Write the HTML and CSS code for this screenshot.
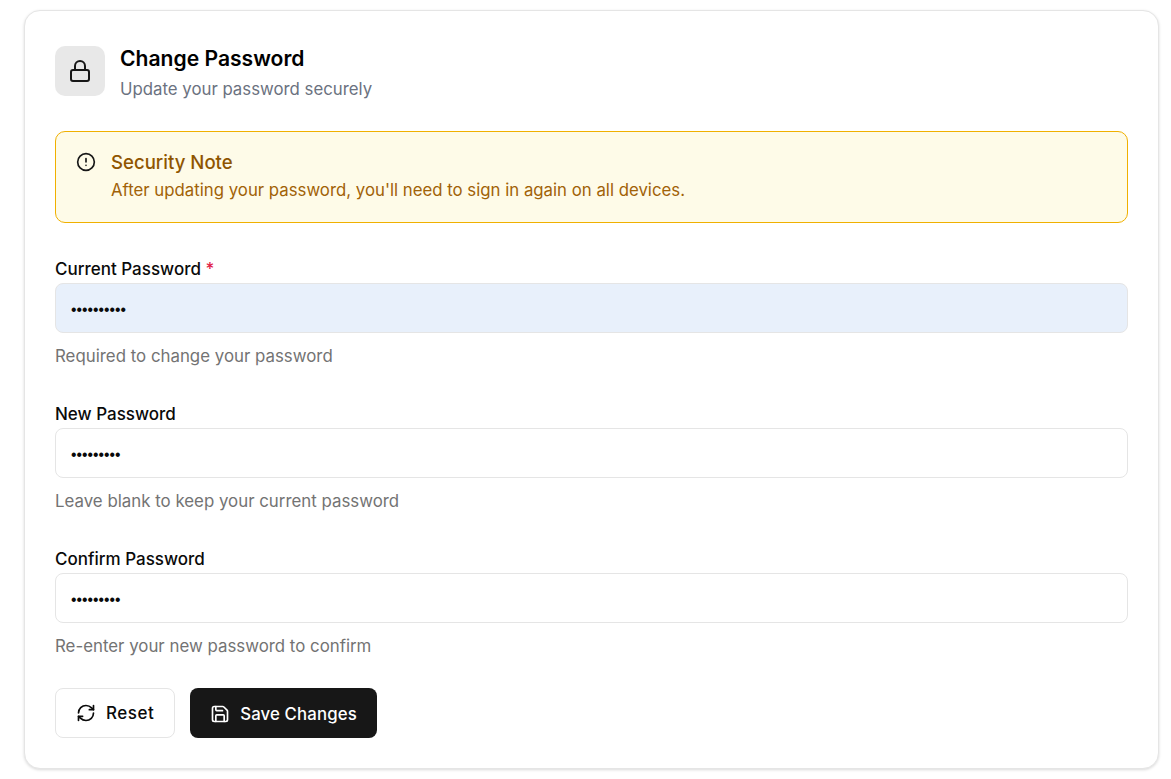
FILE: index.html
```html
<!DOCTYPE html>
<html lang="en">
<head>
    <meta charset="UTF-8">
    <meta name="viewport" content="width=device-width, initial-scale=1.0">
    <title>Change Password</title>
    <link rel="stylesheet" href="styles.css">
</head>
<body>

<div class="card">
    <div class="card-header">
        <div class="header-icon">
            <svg width="24" height="24" viewBox="0 0 24 24" fill="none" stroke="currentColor" stroke-width="2" stroke-linecap="round" stroke-linejoin="round">
                <rect x="3" y="11" width="18" height="11" rx="2"></rect>
                <path d="M7 11V7a5 5 0 0 1 10 0v4"></path>
            </svg>
        </div>
        <div>
            <h2 class="card-title">Change Password</h2>
            <p class="card-subtitle">Update your password securely</p>
        </div>
    </div>

    <div class="note">
        <svg class="note-icon" width="20" height="20" viewBox="0 0 24 24" fill="none" stroke="currentColor" stroke-width="2" stroke-linecap="round" stroke-linejoin="round">
            <circle cx="12" cy="12" r="10"></circle>
            <line x1="12" y1="8" x2="12" y2="12"></line>
            <line x1="12" y1="16" x2="12.01" y2="16"></line>
        </svg>
        <div>
            <div class="note-title">Security Note</div>
            <div class="note-text">After updating your password, you'll need to sign in again on all devices.</div>
        </div>
    </div>

    <form>
        <div class="field">
            <label for="current">Current Password <span class="required">*</span></label>
            <input class="autofilled" type="password" id="current" value="1234567890">
            <p class="hint">Required to change your password</p>
        </div>
        <div class="field">
            <label for="new">New Password</label>
            <input type="password" id="new" value="123456789">
            <p class="hint">Leave blank to keep your current password</p>
        </div>
        <div class="field field-last">
            <label for="confirm">Confirm Password</label>
            <input type="password" id="confirm" value="123456789">
            <p class="hint">Re-enter your new password to confirm</p>
        </div>
        <div class="actions">
            <button type="button" class="btn btn-reset">
                <svg width="20" height="20" viewBox="0 0 24 24" fill="none" stroke="currentColor" stroke-width="2" stroke-linecap="round" stroke-linejoin="round">
                    <path d="M3 12a9 9 0 0 1 9-9 9.75 9.75 0 0 1 6.74 2.74L21 8"></path>
                    <path d="M21 3v5h-5"></path>
                    <path d="M21 12a9 9 0 0 1-9 9 9.75 9.75 0 0 1-6.74-2.74L3 16"></path>
                    <path d="M8 16H3v5"></path>
                </svg>
                Reset
            </button>
            <button type="button" class="btn btn-save">
                <svg width="20" height="20" viewBox="0 0 24 24" fill="none" stroke="currentColor" stroke-width="2" stroke-linecap="round" stroke-linejoin="round">
                    <path d="M15.2 3a2 2 0 0 1 1.4.6l3.8 3.8a2 2 0 0 1 .6 1.4V19a2 2 0 0 1-2 2H5a2 2 0 0 1-2-2V5a2 2 0 0 1 2-2z"></path>
                    <path d="M17 21v-7a1 1 0 0 0-1-1H8a1 1 0 0 0-1 1v7"></path>
                    <path d="M7 3v4a1 1 0 0 0 1 1h7"></path>
                </svg>
                Save Changes
            </button>
        </div>
    </form>
</div>

</body>
</html>
```

FILE: styles.css
```css
* {
    box-sizing: border-box;
}
body {
    margin: 0;
    padding: 10px 12px 10px 24px;
    font-family: Inter, "Liberation Sans", sans-serif;
    background-color: #fff;
    color: #0a0a0a;
}
.card {
    background-color: #fff;
    border: 1px solid #e5e5e5;
    border-radius: 16px;
    box-shadow: 0 1px 3px rgba(0, 0, 0, 0.15);
    padding: 35px 30px 30px;
}
.card-header {
    display: flex;
    gap: 15px;
    margin-bottom: 29px;
}
.header-icon {
    width: 50px;
    height: 50px;
    border-radius: 10px;
    background-color: #e8e8e8;
    color: #171717;
    display: flex;
    align-items: center;
    justify-content: center;
}
.card-title {
    margin: 0;
    font-size: 21.1px;
    line-height: 26px;
    font-weight: 600;
    color: #000;
}
.card-subtitle {
    margin: 5px 0 0;
    font-size: 16.8px;
    line-height: 25px;
    color: #6b7280;
}
.note {
    display: flex;
    gap: 15px;
    height: 92px;
    padding: 20px;
    margin-bottom: 34px;
    background-color: #fefbe8;
    border: 1px solid #f0b000;
    border-radius: 10px;
}
.note-icon {
    flex-shrink: 0;
    color: #171717;
}
.note-title {
    font-size: 18.6px;
    line-height: 20px;
    font-weight: 500;
    color: #8f5500;
}
.note-text {
    margin-top: 6px;
    font-size: 16.8px;
    line-height: 24px;
    color: #a16207;
}
.field {
    margin-bottom: 34px;
}
.field-last {
    margin-bottom: 30px;
}
.field label {
    display: block;
    font-size: 17px;
    line-height: 24px;
    font-weight: 500;
    margin-bottom: 2px;
}
.required {
    color: #e11d48;
}
.field input {
    display: block;
    width: 100%;
    height: 50px;
    padding: 3px 15px 0;
    font-family: "Liberation Sans", sans-serif;
    font-size: 15.7px;
    color: #0a0a0a;
    background-color: #fff;
    border: 1px solid #e5e5e5;
    border-radius: 8px;
    outline: none;
}
.field input.autofilled {
    background-color: #e8f0fb;
}
.hint {
    margin: 11px 0 0;
    font-size: 16.85px;
    line-height: 24px;
    color: #737373;
}
.actions {
    display: flex;
    gap: 15px;
}
.btn {
    display: flex;
    align-items: center;
    gap: 10px;
    height: 50px;
    padding: 1px 20px 0;
    font-family: inherit;
    font-size: 17px;
    font-weight: 500;
    border-radius: 8px;
    border: none;
}
.btn-reset {
    padding: 0 20px;
    letter-spacing: 0.5px;
    background-color: #fff;
    color: #0a0a0a;
    border: 1px solid #e5e5e5;
}
.btn-save {
    font-size: 16.8px;
    letter-spacing: 0.13px;
    background-color: #171717;
    color: #fff;
}
```
